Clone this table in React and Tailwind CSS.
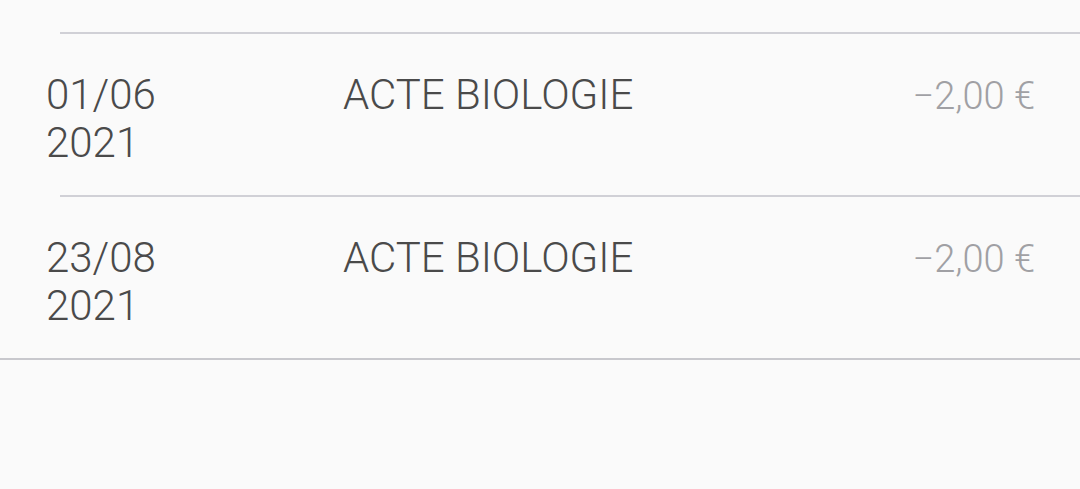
const rows = [
  { date: '01/06', year: '2021', label: 'ACTE BIOLOGIE', amount: '−2,00 €' },
  { date: '23/08', year: '2021', label: 'ACTE BIOLOGIE', amount: '−2,00 €' },
];

export default function App() {
  return (
    <div className="w-[1080px] h-[489px] bg-[#fafafa] font-['Roboto','Liberation_Sans',sans-serif] font-light">
      <div className="h-[32px]" />
      {rows.map((r, i) => (
        <div key={i}>
          <div className="ml-[60px] h-[2px] bg-[#d0d0d6]" />
          <div className="flex items-baseline pl-[46px] pr-[45px] pt-[37px] pb-[28px] text-[42px] leading-[48px]">
            <div className="w-[297px] text-[#4a4a4a]">
              <div>{r.date}</div>
              <div>{r.year}</div>
            </div>
            <div className="flex-1 text-[#4a4a4a]">{r.label}</div>
            <div className="text-[38px] text-[#a0a0a4]">{r.amount}</div>
          </div>
        </div>
      ))}
      <div className="h-[2px] bg-[#c8c8cd]" />
    </div>
  );
}
